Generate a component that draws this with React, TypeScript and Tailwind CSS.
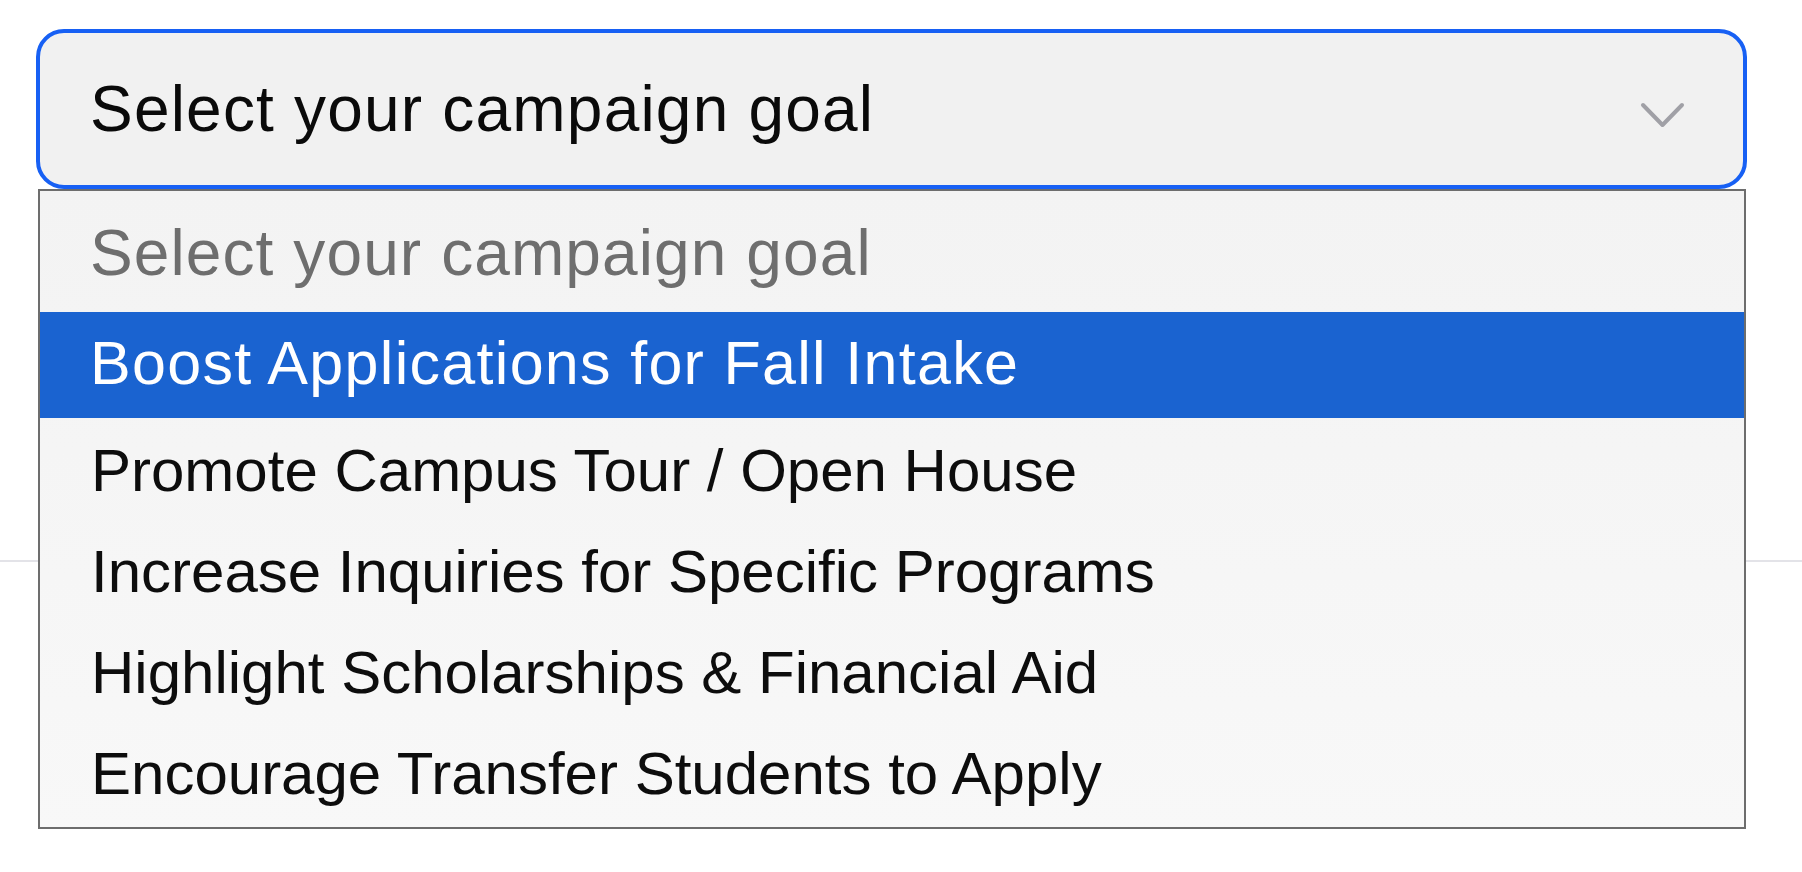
import React from 'react';

const goals = [
  'Boost Applications for Fall Intake',
  'Promote Campus Tour / Open House',
  'Increase Inquiries for Specific Programs',
  'Highlight Scholarships & Financial Aid',
  'Encourage Transfer Students to Apply',
];

export default function App() {
  const selected = 0;

  return (
    <div className="relative w-[1802px] h-[872px] bg-white overflow-hidden font-['Liberation_Sans',Arial,sans-serif]">
      {/* select trigger */}
      <div className="pt-[29px] pl-[36px] pr-[55px]">
        <div className="h-[160px] rounded-[28px] border-4 border-[#1760f4] bg-[#f1f1f1] flex items-center justify-between pl-[50px] pr-[57px]">
          <span className="text-[64px] leading-[156px] tracking-[1.2px] text-[#0a0a0a]">Select your campaign goal</span>
          <svg width="47" height="29" viewBox="0 0 47 29" fill="none" className="mt-[12px]">
            <path d="M4 4 L23.5 24 L43 4" stroke="#a0a0a6" strokeWidth="4" strokeLinecap="round" strokeLinejoin="round" />
          </svg>
        </div>
      </div>

      {/* divider behind the open list */}
      <div className="mt-[371px] h-[2px] bg-[#e3e3e8]" />

      {/* open options list */}
      <div className="absolute left-[38px] top-[189px] w-[1708px] h-[640px] border-2 border-[#6d6d6d] bg-gradient-to-b from-[#f3f3f3] to-[#f8f8f8]">
        <div className="h-[121px] pt-[4px] pl-[50px] text-[64px] leading-[116px] tracking-[1.1px] text-[#6e6e6e]">
          Select your campaign goal
        </div>
        {goals.map((g, i) =>
          i === selected ? (
            <div key={g} className="h-[106px] pl-[50px] text-[61px] leading-[102px] tracking-[1.3px] bg-[#1a63d0] text-white">
              {g}
            </div>
          ) : (
            <div key={g} className="h-[101px] pt-[5px] pl-[51px] text-[60px] leading-[96px] text-[#0d0d0d]">
              {g}
            </div>
          )
        )}
      </div>
    </div>
  );
}
